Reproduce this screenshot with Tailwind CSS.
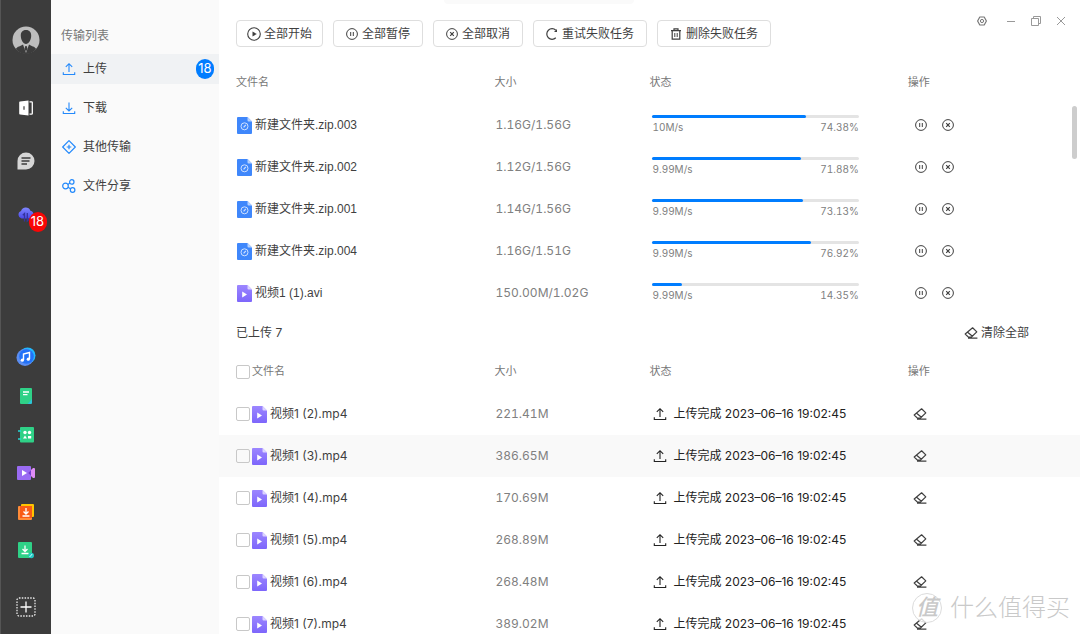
<!DOCTYPE html>
<html lang="zh-CN">
<head>
<meta charset="utf-8">
<meta name="viewport" content="width=device-width, initial-scale=1">
<title>传输列表</title>
<script src="https://cdn.jsdelivr.net/npm/@tailwindcss/browser@4"></script>
</head>
<body class="bg-white font-['Inter','Noto_Sans_CJK_SC',sans-serif] text-xs text-[#3f3f3f]">

<svg class="absolute size-0" aria-hidden="true">
  <defs>
    <linearGradient id="violet" x1="0" y1="0" x2="0" y2="1"><stop offset="0" stop-color="#9c86ff"/><stop offset="1" stop-color="#7d66fb"/></linearGradient>
    <linearGradient id="cloudfill" x1="0" y1="0" x2="0" y2="1"><stop offset="0" stop-color="#7f86ff"/><stop offset="1" stop-color="#4a49e8"/></linearGradient>
  </defs>
  <symbol id="play" viewBox="0 0 14 14"><circle cx="7" cy="7" r="6.3" fill="none" stroke="currentColor" stroke-width="1.1"/><path d="M5.5 4.6v4.8L9.800 7z" fill="currentColor"/></symbol>
  <symbol id="pause" viewBox="0 0 12 12"><circle cx="6" cy="6" r="5.4" fill="none" stroke="currentColor"/><path d="M4.700 4v4M7.300 4v4" stroke="currentColor"/></symbol>
  <symbol id="cancel" viewBox="0 0 12 12"><circle cx="6" cy="6" r="5.4" fill="none" stroke="currentColor"/><path d="M4.200 4.200l3.600 3.600M7.800 4.200L4.200 7.800" stroke="currentColor" stroke-width="1.200"/></symbol>
  <symbol id="retry" viewBox="0 0 12 12"><path d="M9.800 9.800A5.300 5.300 0 1 1 9.800 2.200" fill="none" stroke="currentColor" stroke-width="1.200"/><path d="M8 4h3V1z" fill="currentColor"/></symbol>
  <symbol id="trash" viewBox="0 0 12 12"><path d="M1 2.600h10M4 2.200V.8h4v1.400M2.200 3v8.200h7.600V3" fill="none" stroke="currentColor" stroke-width="1.200"/><path d="M4.800 5v4M7.200 5v4" stroke="currentColor"/></symbol>
  <symbol id="upload" viewBox="0 0 14 14"><path d="M7 10V2M3.800 4.900L7 1.700l3.200 3.200M1.300 10.300v2.200h11.400v-2.200" fill="none" stroke="currentColor" stroke-width="1.100"/></symbol>
  <symbol id="download" viewBox="0 0 14 14"><path d="M7 1.500v8.300M3.800 6.800L7 10l3.200-3.200M1.300 10.300v2.200h11.400v-2.200" fill="none" stroke="currentColor" stroke-width="1.100"/></symbol>
  <symbol id="eraser" viewBox="0 0 14 14"><path d="M8.600 1.800l4.200 4.100-5.600 5.300H4.400L1.200 8zM3.600 6.200l4.800 4M4 12.200h9.400" fill="none" stroke="currentColor" stroke-width="1.200" stroke-linejoin="round"/></symbol>
  <symbol id="zip" viewBox="0 0 15 17"><path d="M1 0h9.500L15 4.500V16a1 1 0 0 1-1 1H1a1 1 0 0 1-1-1V1a1 1 0 0 1 1-1z" fill="#3f87fb"/><path d="M10.500 0L15 4.500h-3.500a1 1 0 0 1-1-1z" fill="#b5d2ff"/><circle cx="7.500" cy="9.300" r="3.500" fill="none" stroke="#cfe1ff"/><path d="M6.600 10.400l2.200-2.600" stroke="#cfe1ff" stroke-width="1.200"/></symbol>
  <symbol id="video" viewBox="0 0 15 17"><path d="M1 0h9.500L15 4.500V16a1 1 0 0 1-1 1H1a1 1 0 0 1-1-1V1a1 1 0 0 1 1-1z" fill="url(#violet)"/><path d="M10.500 0L15 4.500h-3.500a1 1 0 0 1-1-1z" fill="#dcd4ff"/><path d="M5.200 6.500v6L10 9.500z" fill="#fff"/></symbol>
</svg>

<div class="flex h-screen overflow-hidden">

  <nav aria-label="应用" class="flex w-[51px] shrink-0 flex-col items-center border-l border-[#555] bg-[#3c3c3c] pt-[26px] pr-px">
    <button aria-label="账户" class="mb-[46px] size-7">
      <svg class="size-7" viewBox="0 0 28 28"><circle cx="14" cy="14" r="13.500" fill="#bdbdbd"/><path d="M3.800 23C5 20.500 9 20 11 18.500L14 27l3-8.500c2 1.500 6 2 7.200 4.500A13 13 0 0 1 3.800 23z" fill="#3c3c3c"/><path d="M14 4c3.600 0 5.400 2.400 5.200 6-.2 4-2.400 8-5.200 8S9 14 8.800 10C8.600 6.400 10.400 4 14 4z" fill="#3c3c3c"/><path d="M13.300 20h1.400l.8 3-1.500 2.500-1.500-2.500z" fill="#3c3c3c"/></svg>
    </button>
    <button aria-label="文件" class="mb-9 size-4">
      <svg class="size-4" viewBox="0 0 16 16"><path d="M2 1.600L10.500.6v14.800L2 14.400a1 1 0 0 1-.8-1V2.600a1 1 0 0 1 .8-1z" fill="#fff"/><path d="M11.500 1.800h2a.8.8 0 0 1 .8.8v10.800a.8.8 0 0 1-.8.8h-2" fill="none" stroke="#fff" stroke-width="1.300"/><path d="M6 6.300v3.400" stroke="#3c3c3c" stroke-width="1.200"/></svg>
    </button>
    <button aria-label="消息" class="mb-9 size-[18px]">
      <svg class="size-[18px]" viewBox="0 0 18 18"><path d="M9 .5a8.500 8.500 0 0 1 0 17H.5V9A8.500 8.500 0 0 1 9 .5z" fill="#d6d6d6"/><path d="M4.500 6h9M4.500 9h8M4.500 12h5.500" stroke="#3c3c3c" stroke-width="1.300"/></svg>
    </button>
    <button aria-label="传输，18 项" class="relative mb-[123px] size-[18px]">
      <svg class="size-[18px]" viewBox="0 0 18 18"><path d="M4.500 12.500A4 4 0 0 1 4 4.900a5 5 0 0 1 9.400-.2 4 4 0 0 1 .1 7.800z" fill="url(#cloudfill)"/><path d="M7.500 15.500V7.500L5.800 9.200M10.300 7v8l1.700-1.700" fill="none" stroke="#35349e" stroke-width="1.300"/></svg>
      <span class="absolute top-[6px] left-[12px] flex h-5 w-[18px] items-center justify-center rounded-full bg-[#f90606] text-[13px] text-white">18</span>
    </button>
    <button aria-label="音乐" class="mb-[21px] size-5">
      <svg class="size-5" viewBox="0 0 20 20"><circle cx="11.500" cy="8.500" r="8" fill="#22b8ff"/><circle cx="9" cy="10.500" r="8.500" fill="#5b8df0"/><circle cx="10.500" cy="9.500" r="7.300" fill="#2272f8"/><path d="M7.500 13V7l6-1.500V12" fill="none" stroke="#fff" stroke-width="1.400"/><circle cx="6.300" cy="13.200" r="1.600" fill="#fff"/><circle cx="12.300" cy="12.200" r="1.600" fill="#fff"/></svg>
    </button>
    <button aria-label="笔记" class="mb-[23px] size-4">
      <svg class="size-4" viewBox="0 0 16 16"><path d="M3 0h10a1 1 0 0 1 1 1v11l-4 4H3a1 1 0 0 1-1-1V1a1 1 0 0 1 1-1z" fill="#2fd187"/><path d="M14 11v4a1 1 0 0 1-1 1H9.500z" fill="#2cc5d6"/><path d="M5 4h6M5 6.700h4.500" stroke="#fff" stroke-width="1.300"/></svg>
    </button>
    <button aria-label="通讯录" class="mb-[23px] size-4">
      <svg class="size-4" viewBox="0 0 16 16"><rect x="2" y="0" width="14" height="15.500" rx="1" fill="#2fd187"/><path d="M0 4h3M0 12h3" stroke="#25d6d6" stroke-width="1.600"/><circle cx="7" cy="5.500" r="1.700" fill="#fff"/><circle cx="11.500" cy="5.500" r="1.700" fill="#fff"/><path d="M5 11.500L7 8.500l2 3zM10 9h3.200v2.500H10z" fill="#fff"/></svg>
    </button>
    <button aria-label="视频" class="mb-6 h-[14px] w-[18px]">
      <svg class="h-[14px] w-[18px]" viewBox="0 0 18 14"><rect width="14" height="14" rx="1" fill="#9a6bf3"/><path d="M11 7l5-5h1a1 1 0 0 1 1 1v8a1 1 0 0 1-1 1h-1z" fill="#df8cf5"/><path d="M11 7l3-3v6z" fill="#6f3fd0"/><path d="M5 4v6l5-3z" fill="#fff"/></svg>
    </button>
    <button aria-label="下载中心" class="mb-[22px] size-4">
      <svg class="size-4" viewBox="0 0 16 16"><rect x="3" y="0" width="13" height="13" rx="1" fill="#ffc400"/><rect y="2" width="14" height="14" rx="1" fill="#ff8b38"/><rect x="2" y="2" width="12" height="12" fill="#f95b16"/><path d="M8 4v6M5.500 7.500L8 10l2.500-2.500M4.500 12h7" fill="none" stroke="#fff" stroke-width="1.300"/></svg>
    </button>
    <button aria-label="离线下载" class="mb-[38px] size-[17px]">
      <svg class="size-[17px]" viewBox="0 0 17 17"><rect x="1" width="14" height="16" rx="1" fill="#2fd187"/><path d="M8 3.500v6M5.500 7L8 9.500 10.500 7M4.500 11.500h7" fill="none" stroke="#fff" stroke-width="1.300"/><circle cx="14.300" cy="13.500" r="2.700" fill="#23c9c4"/><path d="M12.500 14.500c1-.2 2-1 2.500-2.500" stroke="#d6ffff" fill="none"/></svg>
    </button>
    <button aria-label="添加应用" class="size-5">
      <svg class="size-5" viewBox="0 0 20 20"><rect x="1" y="1" width="18" height="18" rx="2" fill="none" stroke="#e8e8e8" stroke-width="1.300" stroke-dasharray="1.500 1.300"/><path d="M10 4.500v11M4.500 10h11" stroke="#fff" stroke-width="1.300"/></svg>
    </button>
  </nav>

  <aside class="w-[168px] shrink-0 bg-[#fafafa] pt-[26px]">
    <h1 class="mb-2 pl-2.5 leading-5 text-[#777]">传输列表</h1>
    <ul class="flex flex-col gap-[9px]">
      <li><a href="#upload" class="flex h-[30px] items-center gap-[7px] bg-[#f0f2f4] pr-[5px] pl-[11px]"><svg class="size-[14px] text-[#2389fb]"><use href="#upload"/></svg><span class="flex-1">上传</span><span class="flex h-5 w-[18px] items-center justify-center rounded-full bg-[#007dff] text-[13px] text-white">18</span></a></li>
      <li><a href="#download" class="flex h-[30px] items-center gap-[7px] pl-[11px]"><svg class="size-[14px] text-[#2389fb]"><use href="#download"/></svg>下载</a></li>
      <li><a href="#other" class="flex h-[30px] items-center gap-[7px] pl-[11px]"><svg class="size-[14px] text-[#2389fb]" viewBox="0 0 14 14"><path d="M7 .7L13.300 7 7 13.300.7 7zM7 4.700v4.600M4.700 7h4.600" fill="none" stroke="currentColor" stroke-width="1.200" stroke-linejoin="round"/></svg>其他传输</a></li>
      <li><a href="#share" class="flex h-[30px] items-center gap-[7px] pl-[11px]"><svg class="size-[14px] text-[#2389fb]" viewBox="0 0 14 14"><g fill="none" stroke="currentColor" stroke-width="1.200"><circle cx="3.500" cy="7" r="2.800"/><circle cx="9.800" cy="2.900" r="2.200"/><circle cx="10.600" cy="11" r="2.300"/><path d="M5.800 5.400L8 4.100M6 8.300l2.500 1.500"/></g></svg>文件分享</a></li>
    </ul>
  </aside>

  <main class="relative min-w-0 flex-1">
    <div class="absolute top-0 left-[225px] h-1 w-[190px] rounded-b-full bg-[#fafafa]"></div>
    <header class="flex items-start justify-between pt-5 pr-[14px] pl-[17px]">
      <div class="flex gap-2.5">
        <button class="flex h-[27px] items-center gap-[3px] rounded border border-[#dedede] px-2.5"><svg class="size-[14px]"><use href="#play"/></svg>全部开始</button>
        <button class="flex h-[27px] items-center gap-1 rounded border border-[#dedede] px-3"><svg class="size-3"><use href="#pause"/></svg>全部暂停</button>
        <button class="flex h-[27px] items-center gap-1 rounded border border-[#dedede] px-3"><svg class="size-3"><use href="#cancel"/></svg>全部取消</button>
        <button class="flex h-[27px] items-center gap-1 rounded border border-[#dedede] px-3"><svg class="size-3"><use href="#retry"/></svg>重试失败任务</button>
        <button class="flex h-[27px] items-center gap-1 rounded border border-[#dedede] px-3"><svg class="size-3"><use href="#trash"/></svg>删除失败任务</button>
      </div>
      <div class="-mt-1 flex items-center gap-[15px] text-[#999]">
        <button aria-label="设置" class="mr-1 text-[#777]"><svg class="size-2.5" viewBox="0 0 10 10"><path d="M2.800 1h4.400l2.200 4-2.200 4H2.800L.6 5z" fill="none" stroke="currentColor" stroke-width="1.200" stroke-linejoin="round"/><circle cx="5" cy="5" r="1.600" fill="none" stroke="currentColor"/></svg></button>
        <button aria-label="最小化"><svg class="size-2.5" viewBox="0 0 10 10"><path d="M1 5.500h8" stroke="currentColor"/></svg></button>
        <button aria-label="还原"><svg class="size-2.5" viewBox="0 0 10 10"><path d="M.5 2.500h7v7h-7zM2.500 2.500v-2h7v7h-2" fill="none" stroke="currentColor"/></svg></button>
        <button aria-label="关闭"><svg class="size-2.5" viewBox="0 0 10 10"><path d="M1 1l8 8M9 1L1 9" stroke="currentColor"/></svg></button>
      </div>
    </header>

    <table class="mt-[13px] w-full table-fixed text-left">
      <thead>
        <tr class="h-11 text-[11px] text-[#777]"><th scope="col" class="w-[32%] pl-[17px] font-normal">文件名</th><th scope="col" class="w-[18%] font-normal">大小</th><th scope="col" class="w-[30%] font-normal">状态</th><th scope="col" class="w-[20%] font-normal">操作</th></tr>
      </thead>
      <tbody>
        <tr class="h-[42px]"><td class="pl-[18px] font-['Liberation_Sans','Noto_Sans_CJK_SC',sans-serif]"><span class="flex items-center gap-[3px]"><svg class="h-[17px] w-[15px]"><use href="#zip"/></svg>新建文件夹.zip.003</span></td><td class="pl-px text-[#808080] tabular-nums">1.16G/1.56G</td><td class="pr-[49px] pb-0.5 pl-[3px] text-[10px] leading-3 text-[#808080]"><div class="mb-[3px] h-[3px] rounded-full bg-[#e4e4e4]"><div class="h-full rounded-full bg-[#007dff]" style="width:74.38%"></div></div><div class="flex justify-between tabular-nums"><span>10M/s</span><span>74.38%</span></div></td><td><span class="flex gap-[15px] pl-[7px]"><button aria-label="暂停"><svg class="block size-3"><use href="#pause"/></svg></button><button aria-label="取消"><svg class="block size-3"><use href="#cancel"/></svg></button></span></td></tr>
        <tr class="h-[42px]"><td class="pl-[18px] font-['Liberation_Sans','Noto_Sans_CJK_SC',sans-serif]"><span class="flex items-center gap-[3px]"><svg class="h-[17px] w-[15px]"><use href="#zip"/></svg>新建文件夹.zip.002</span></td><td class="pl-px text-[#808080] tabular-nums">1.12G/1.56G</td><td class="pr-[49px] pb-0.5 pl-[3px] text-[10px] leading-3 text-[#808080]"><div class="mb-[3px] h-[3px] rounded-full bg-[#e4e4e4]"><div class="h-full rounded-full bg-[#007dff]" style="width:71.88%"></div></div><div class="flex justify-between tabular-nums"><span>9.99M/s</span><span>71.88%</span></div></td><td><span class="flex gap-[15px] pl-[7px]"><button aria-label="暂停"><svg class="block size-3"><use href="#pause"/></svg></button><button aria-label="取消"><svg class="block size-3"><use href="#cancel"/></svg></button></span></td></tr>
        <tr class="h-[42px]"><td class="pl-[18px] font-['Liberation_Sans','Noto_Sans_CJK_SC',sans-serif]"><span class="flex items-center gap-[3px]"><svg class="h-[17px] w-[15px]"><use href="#zip"/></svg>新建文件夹.zip.001</span></td><td class="pl-px text-[#808080] tabular-nums">1.14G/1.56G</td><td class="pr-[49px] pb-0.5 pl-[3px] text-[10px] leading-3 text-[#808080]"><div class="mb-[3px] h-[3px] rounded-full bg-[#e4e4e4]"><div class="h-full rounded-full bg-[#007dff]" style="width:73.13%"></div></div><div class="flex justify-between tabular-nums"><span>9.99M/s</span><span>73.13%</span></div></td><td><span class="flex gap-[15px] pl-[7px]"><button aria-label="暂停"><svg class="block size-3"><use href="#pause"/></svg></button><button aria-label="取消"><svg class="block size-3"><use href="#cancel"/></svg></button></span></td></tr>
        <tr class="h-[42px]"><td class="pl-[18px] font-['Liberation_Sans','Noto_Sans_CJK_SC',sans-serif]"><span class="flex items-center gap-[3px]"><svg class="h-[17px] w-[15px]"><use href="#zip"/></svg>新建文件夹.zip.004</span></td><td class="pl-px text-[#808080] tabular-nums">1.16G/1.51G</td><td class="pr-[49px] pb-0.5 pl-[3px] text-[10px] leading-3 text-[#808080]"><div class="mb-[3px] h-[3px] rounded-full bg-[#e4e4e4]"><div class="h-full rounded-full bg-[#007dff]" style="width:76.92%"></div></div><div class="flex justify-between tabular-nums"><span>9.99M/s</span><span>76.92%</span></div></td><td><span class="flex gap-[15px] pl-[7px]"><button aria-label="暂停"><svg class="block size-3"><use href="#pause"/></svg></button><button aria-label="取消"><svg class="block size-3"><use href="#cancel"/></svg></button></span></td></tr>
        <tr class="h-[42px]"><td class="pl-[18px] font-['Liberation_Sans','Noto_Sans_CJK_SC',sans-serif]"><span class="flex items-center gap-[3px]"><svg class="h-[17px] w-[15px]"><use href="#video"/></svg>视频1 (1).avi</span></td><td class="pl-px text-[#808080] tabular-nums">150.00M/1.02G</td><td class="pr-[49px] pb-0.5 pl-[3px] text-[10px] leading-3 text-[#808080]"><div class="mb-[3px] h-[3px] rounded-full bg-[#e4e4e4]"><div class="h-full rounded-full bg-[#007dff]" style="width:14.35%"></div></div><div class="flex justify-between tabular-nums"><span>9.99M/s</span><span>14.35%</span></div></td><td><span class="flex gap-[15px] pl-[7px]"><button aria-label="暂停"><svg class="block size-3"><use href="#pause"/></svg></button><button aria-label="取消"><svg class="block size-3"><use href="#cancel"/></svg></button></span></td></tr>
      </tbody>
    </table>

    <div class="flex h-[38px] items-center justify-between pr-[51px] pl-[17px]">
      <h2>已上传 7</h2>
      <button class="flex items-center gap-[3px]"><svg class="size-[14px]"><use href="#eraser"/></svg>清除全部</button>
    </div>

    <table class="w-full table-fixed text-left">
      <thead>
        <tr class="h-[41px] text-[11px] text-[#777]"><th scope="col" class="w-[32%] pb-0.5 pl-[17px] font-normal"><label class="flex items-center gap-[2px]"><input type="checkbox" class="size-[14px] appearance-none rounded-xs border border-[#c8c8c8] bg-white">文件名</label></th><th scope="col" class="w-[18%] pb-0.5 font-normal">大小</th><th scope="col" class="w-[30%] pb-0.5 font-normal">状态</th><th scope="col" class="w-[20%] pb-0.5 font-normal">操作</th></tr>
      </thead>
      <tbody>
        <tr class="h-[42px]"><td class="pl-[17px]"><label class="flex items-center gap-[2px]"><input type="checkbox" class="size-[14px] appearance-none rounded-xs border border-[#c8c8c8]"><svg class="mr-px h-[17px] w-[15px]"><use href="#video"/></svg>视频1 (2).mp4</label></td><td class="pl-px text-[#808080] tabular-nums">221.41M</td><td class="pl-1 text-[#222]"><span class="flex items-center gap-1.5"><svg class="size-[14px]"><use href="#upload"/></svg>上传完成 2023–06–16 19:02:45</span></td><td class="pl-[5px]"><button aria-label="清除" class="block"><svg class="block size-[14px]"><use href="#eraser"/></svg></button></td></tr>
        <tr class="h-[42px] bg-[#f9f9f9]"><td class="pl-[17px]"><label class="flex items-center gap-[2px]"><input type="checkbox" class="size-[14px] appearance-none rounded-xs border border-[#c8c8c8]"><svg class="mr-px h-[17px] w-[15px]"><use href="#video"/></svg>视频1 (3).mp4</label></td><td class="pl-px text-[#808080] tabular-nums">386.65M</td><td class="pl-1 text-[#222]"><span class="flex items-center gap-1.5"><svg class="size-[14px]"><use href="#upload"/></svg>上传完成 2023–06–16 19:02:45</span></td><td class="pl-[5px]"><button aria-label="清除" class="block"><svg class="block size-[14px]"><use href="#eraser"/></svg></button></td></tr>
        <tr class="h-[42px]"><td class="pl-[17px]"><label class="flex items-center gap-[2px]"><input type="checkbox" class="size-[14px] appearance-none rounded-xs border border-[#c8c8c8]"><svg class="mr-px h-[17px] w-[15px]"><use href="#video"/></svg>视频1 (4).mp4</label></td><td class="pl-px text-[#808080] tabular-nums">170.69M</td><td class="pl-1 text-[#222]"><span class="flex items-center gap-1.5"><svg class="size-[14px]"><use href="#upload"/></svg>上传完成 2023–06–16 19:02:45</span></td><td class="pl-[5px]"><button aria-label="清除" class="block"><svg class="block size-[14px]"><use href="#eraser"/></svg></button></td></tr>
        <tr class="h-[42px]"><td class="pl-[17px]"><label class="flex items-center gap-[2px]"><input type="checkbox" class="size-[14px] appearance-none rounded-xs border border-[#c8c8c8]"><svg class="mr-px h-[17px] w-[15px]"><use href="#video"/></svg>视频1 (5).mp4</label></td><td class="pl-px text-[#808080] tabular-nums">268.89M</td><td class="pl-1 text-[#222]"><span class="flex items-center gap-1.5"><svg class="size-[14px]"><use href="#upload"/></svg>上传完成 2023–06–16 19:02:45</span></td><td class="pl-[5px]"><button aria-label="清除" class="block"><svg class="block size-[14px]"><use href="#eraser"/></svg></button></td></tr>
        <tr class="h-[42px]"><td class="pl-[17px]"><label class="flex items-center gap-[2px]"><input type="checkbox" class="size-[14px] appearance-none rounded-xs border border-[#c8c8c8]"><svg class="mr-px h-[17px] w-[15px]"><use href="#video"/></svg>视频1 (6).mp4</label></td><td class="pl-px text-[#808080] tabular-nums">268.48M</td><td class="pl-1 text-[#222]"><span class="flex items-center gap-1.5"><svg class="size-[14px]"><use href="#upload"/></svg>上传完成 2023–06–16 19:02:45</span></td><td class="pl-[5px]"><button aria-label="清除" class="block"><svg class="block size-[14px]"><use href="#eraser"/></svg></button></td></tr>
        <tr class="h-[42px]"><td class="pl-[17px]"><label class="flex items-center gap-[2px]"><input type="checkbox" class="size-[14px] appearance-none rounded-xs border border-[#c8c8c8]"><svg class="mr-px h-[17px] w-[15px]"><use href="#video"/></svg>视频1 (7).mp4</label></td><td class="pl-px text-[#808080] tabular-nums">389.02M</td><td class="pl-1 text-[#222]"><span class="flex items-center gap-1.5"><svg class="size-[14px]"><use href="#upload"/></svg>上传完成 2023–06–16 19:02:45</span></td><td class="pl-[5px]"><button aria-label="清除" class="block"><svg class="block size-[14px]"><use href="#eraser"/></svg></button></td></tr>
      </tbody>
    </table>

    <div class="absolute top-[106px] right-[3px] h-[53px] w-[5px] rounded-full bg-[#cdcdcd]"></div>
    <div class="absolute right-2.5 bottom-[10px] flex items-center gap-2 text-[#c9c9c9]">
      <span class="flex size-[30px] items-center justify-center rounded-full border border-[#dcdcdc] bg-white/80 text-[22px] font-medium italic">值</span>
      <span class="text-2xl leading-8 font-light">什么值得买</span>
    </div>
  </main>
</div>
</body>
</html>
